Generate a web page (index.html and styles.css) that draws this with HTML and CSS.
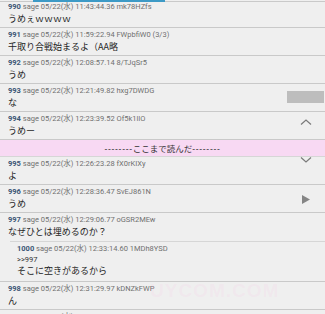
FILE: index.html
```html
<!DOCTYPE html>
<html lang="ja">
<head>
    <meta charset="UTF-8">
    <meta name="viewport" content="width=device-width, initial-scale=1.0">
    <title>スレッド</title>
    <link rel="stylesheet" href="styles.css">
</head>
<body>

    <div class="thread">
        <div class="res">
            <div class="res-head"><span class="num">990</span> sage 05/22(水) 11:43:44.36 mk78HZfs</div>
            <div class="res-body">うめぇｗｗｗｗ</div>
        </div>
        <div class="res">
            <div class="res-head"><span class="num">991</span> sage 05/22(水) 11:59:22.94 FWpbfiW0 (3/3)</div>
            <div class="res-body">千取り合戦始まるよ（AA略</div>
        </div>
        <div class="res">
            <div class="res-head"><span class="num">992</span> sage 05/22(水) 12:08:57.14 8/TJqSr5</div>
            <div class="res-body">うめ</div>
        </div>
        <div class="res">
            <div class="res-head"><span class="num">993</span> sage 05/22(水) 12:21:49.82 hxg7DWDG</div>
            <div class="res-body">な</div>
        </div>
        <div class="res">
            <div class="res-head"><span class="num">994</span> sage 05/22(水) 12:23:39.52 Of5k1lIO</div>
            <div class="res-body">うめー</div>
        </div>

        <!-- しおり -->
        <div class="read-mark"><span class="dash">--------</span>ここまで読んだ<span class="dash">--------</span></div>

        <div class="res">
            <div class="res-head"><span class="num">995</span> sage 05/22(水) 12:26:23.28 fX0rKIXy</div>
            <div class="res-body">よ</div>
        </div>
        <div class="res">
            <div class="res-head"><span class="num">996</span> sage 05/22(水) 12:28:36.47 SvEJ861N</div>
            <div class="res-body">うめ</div>
        </div>
        <div class="res">
            <div class="res-head"><span class="num">997</span> sage 05/22(水) 12:29:06.77 oGSR2MEw</div>
            <div class="res-body">なぜひとは埋めるのか？</div>

            <!-- 返信の展開 -->
            <div class="reply">
                <div class="res-head"><span class="num">1000</span> sage 05/22(水) 12:33:14.60 1MDh8YSD</div>
                <div class="anchor">&gt;&gt;997</div>
                <div class="reply-body">そこに空きがあるから</div>
            </div>
        </div>
        <div class="res">
            <div class="res-head"><span class="num">998</span> sage 05/22(水) 12:31:29.97 kDNZkFWP</div>
            <div class="res-body">ん</div>
        </div>
        <div class="res">
            <div class="res-head"><span class="num">999</span> sage 05/22(水) 12:32:40.11 Xb3kQw7P</div>
            <div class="res-body">埋め</div>
        </div>
    </div>

    <!-- タブの下線 -->
    <div class="tab-bar"><div class="tab-indicator"></div></div>

    <!-- 右側のスクロール操作 -->
    <div class="scroll-thumb"></div>
    <div class="nav-btn nav-up">
        <svg width="12" height="6" viewBox="0 0 12 6"><polyline points="1,5.5 6,1 11,5.5" fill="none" stroke="#7a7a7a" stroke-width="1.2"/></svg>
    </div>
    <div class="nav-btn nav-down">
        <svg width="12" height="6" viewBox="0 0 12 6"><polyline points="1,0.5 6,5 11,0.5" fill="none" stroke="#7a7a7a" stroke-width="1.2"/></svg>
    </div>
    <div class="nav-btn nav-play">
        <svg width="8" height="9" viewBox="0 0 8 9"><polygon points="0,0 8,4.5 0,9" fill="#858585"/></svg>
    </div>

    <div class="watermark">UYCOM.COM</div>

</body>
</html>
```

FILE: styles.css
```css
/* 全体 */
body {
    margin: 0;
    padding: 0;
    background-color: #efefef;
    font-family: 'Roboto', 'Noto Sans CJK JP', sans-serif;
    color: #222;
    height: 314px;
    overflow: hidden;
    position: relative;
}

.thread {
    width: 100%;
}

/* レス 1件 */
.res {
    padding: 2px 8px 1px 8px;
    border-bottom: 1px solid #c9c9c9;
}

.res-head {
    font-size: 7.5px;
    line-height: 10px;
    color: #6f6f6f;
    white-space: nowrap;
}

.num {
    font-weight: bold;
    color: #3c5675;
}

.res-body {
    font-family: 'Noto Sans CJK JP', sans-serif;
    font-size: 9px;
    line-height: 14px;
    color: #1e1e1e;
}

/* ここまで読んだ */
.read-mark {
    background-color: #f8d9f3;
    height: 16px;
    line-height: 16px;
    text-align: center;
    font-family: 'Noto Sans CJK JP', sans-serif;
    font-size: 8.5px;
    color: #333;
    border-bottom: 1px solid #d6d6d6;
}

.dash {
    font-family: 'Liberation Sans', sans-serif;
    letter-spacing: 0.7px;
}

/* 返信ポップアップ */
.reply {
    margin: 2px -8px 0 2px;
    padding: 2px 8px 3px 7px;
    border-top: 1px solid #d6d6d6;
}

.anchor {
    margin-top: 1px;
    font-size: 7.5px;
    line-height: 10px;
    color: #333;
}

.reply-body {
    font-family: 'Noto Sans CJK JP', sans-serif;
    font-size: 9px;
    line-height: 12px;
    color: #1e1e1e;
}

/* 上端のタブ */
.tab-bar {
    position: absolute;
    top: 0;
    left: 0;
    width: 100%;
    height: 2px;
    border-bottom: 1px solid #c9c9c9;
    box-sizing: border-box;
}

.tab-indicator {
    margin-left: 33px;
    width: 132px;
    height: 2px;
    background-color: #3d9ac6;
}

/* スクロール操作 */
.scroll-thumb {
    position: absolute;
    top: 91px;
    left: 287px;
    width: 37px;
    height: 12px;
    background-color: #bdbdbd;
}

.nav-btn {
    position: absolute;
    left: 300px;
    width: 12px;
    display: flex;
    justify-content: center;
}

.nav-up {
    top: 119px;
}

.nav-down {
    top: 157px;
}

.nav-play {
    top: 195px;
}

.watermark {
    position: absolute;
    top: 280px;
    left: 150px;
    font-family: 'Liberation Sans', sans-serif;
    font-size: 19px;
    font-weight: bold;
    color: rgba(255, 170, 220, 0.1);
    letter-spacing: 1px;
}
```
